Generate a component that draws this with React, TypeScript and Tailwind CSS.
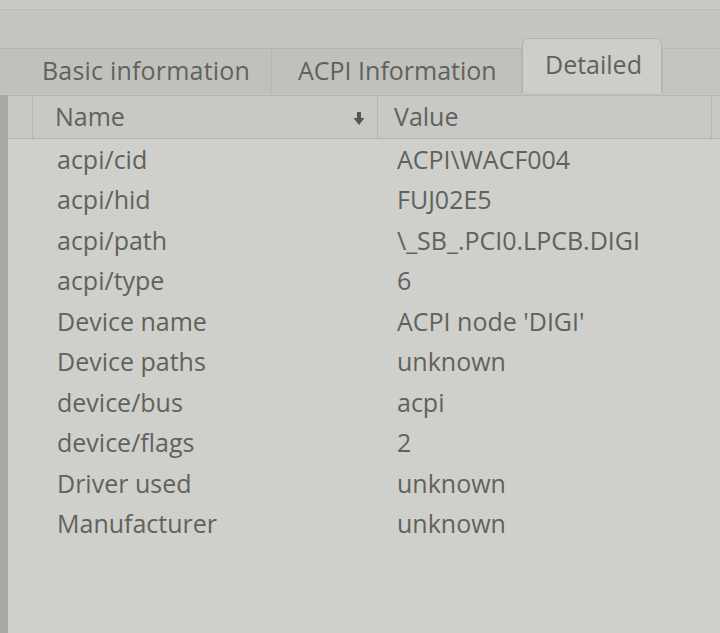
const rows: [string, string][] = [
  ["acpi/cid", "ACPI\\WACF004"],
  ["acpi/hid", "FUJ02E5"],
  ["acpi/path", "\\_SB_.PCI0.LPCB.DIGI"],
  ["acpi/type", "6"],
  ["Device name", "ACPI node 'DIGI'"],
  ["Device paths", "unknown"],
  ["device/bus", "acpi"],
  ["device/flags", "2"],
  ["Driver used", "unknown"],
  ["Manufacturer", "unknown"],
];

export default function App() {
  return (
    <div
      className="flex h-[633px] w-[720px] flex-col overflow-hidden bg-[#c4c5c0] text-[#61625e]"
      style={{ fontFamily: '"Open Sans", "Noto Sans", sans-serif' }}
    >
      {/* strip above tabs */}
      <div className="h-[10px] border-b border-[#b9bab5] bg-[#c9cac5]" />
      <div className="h-[28px]" />

      {/* tabs */}
      <div className="flex h-[55px] items-end">
        <div className="flex h-[45px] w-[272px] items-center border-t border-r border-[#b5b6b1] bg-[#c0c1bc] pl-[42px] text-[25px] tracking-[0.2px]">
          Basic information
        </div>
        <div className="flex h-[45px] w-[250px] items-center border-t border-r border-[#b5b6b1] bg-[#c0c1bc] pl-[26px] text-[25px]">
          ACPI Information
        </div>
        <div className="flex h-[55px] w-[140px] items-center rounded-t-[6px] border border-b-0 border-[#b3b4af] bg-[#cdcec9] pb-[2px] pl-[22px] text-[25px]">
          Detailed
        </div>
        <div className="h-[45px] flex-1 border-t border-l border-[#b5b6b1] bg-[#c3c4bf]" />
      </div>

      {/* table */}
      <div className="mt-[2px] flex flex-1 flex-col border-l-[8px] border-[#a9aaa5] bg-[#cfd0cb]">
        <div className="flex h-[44px] border-b border-t border-[#b4b5b0] bg-[#c8c9c4] text-[25px]">
          <div className="w-[25px] border-r border-[#b4b5b0]" />
          <div className="flex w-[345px] items-center justify-between border-r border-[#b4b5b0] pl-[22px] pr-[12px]">
            <span>Name</span>
            <svg width="12" height="15" viewBox="0 0 12 15" className="mt-[2px]">
              <rect x="4" y="1" width="4" height="7" fill="#555651" />
              <path d="M0.5 7 L11.5 7 L6 14 Z" fill="#555651" />
            </svg>
          </div>
          <div className="flex w-[334px] items-center border-r border-[#b4b5b0] pl-[16px]">Value</div>
          <div className="flex-1" />
        </div>
        <div className="flex flex-col">
          {rows.map(([name, value]) => (
            <div key={name} className="flex h-[40.5px] items-center text-[25px]">
              <div className="w-[370px] pl-[49px]">{name}</div>
              <div className="flex-1 pl-[19px]">{value}</div>
            </div>
          ))}
        </div>
      </div>
    </div>
  );
}
